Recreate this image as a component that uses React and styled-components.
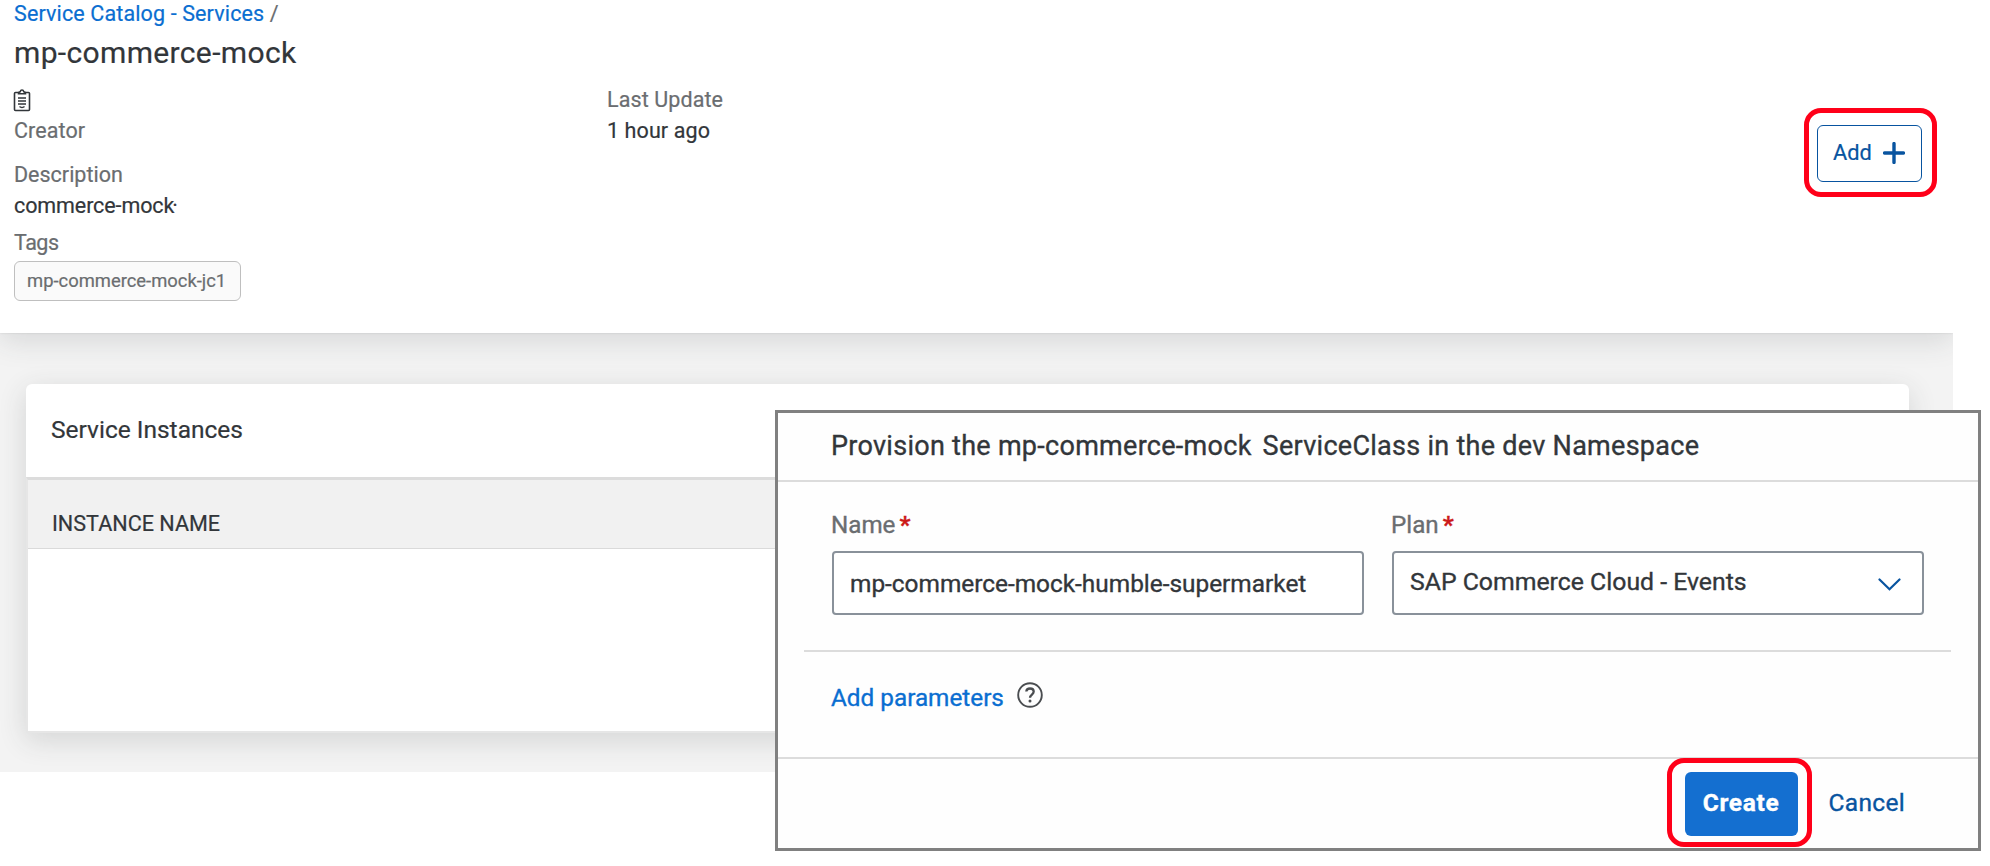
import React from 'react';
import styled, { createGlobalStyle } from 'styled-components';

const Global = createGlobalStyle`
  body { margin: 0; background: #fff; }
  * { box-sizing: border-box; }
`;

const Page = styled.div`
  position: relative;
  width: 1990px;
  height: 866px;
  overflow: hidden;
  font-family: Roboto, "Liberation Sans", sans-serif;
  color: #32363a;
  -webkit-text-stroke: 0.2px;
`;

const Main = styled.main`
  width: 1953px;
  height: 772px;
  overflow: hidden;
  background: #f3f3f3;
`;

const Header = styled.header`
  height: 333px;
  padding: 0 16px 0 14px;
  background: #fff;
  box-shadow: 0 7px 28px rgba(50, 54, 58, 0.15), 0 0 2px rgba(50, 54, 58, 0.15);
`;

const Breadcrumb = styled.nav`
  font-size: 21.5px;
  line-height: 27px;
  letter-spacing: 0.13px;
  color: #6a6d70;
  white-space: pre;
`;

const CrumbLink = styled.a`
  color: #0a6ed1;
`;

const Title = styled.h1`
  margin: 0 0 5px;
  font-size: 30px;
  font-weight: 400;
  line-height: 52px;
  letter-spacing: 0.35px;
`;

const HeaderBody = styled.div`
  display: flex;
  align-items: flex-start;
`;

const Column = styled.div`
  width: ${p => p.$width};
`;

const IconRow = styled.div`
  display: flex;
  align-items: center;
  height: 31px;
  padding-top: 2px;
  svg { margin-left: -1px; }
`;

const Line = styled.div`
  margin-top: ${p => p.$gap || 0}px;
  font-size: 21.5px;
  line-height: 31px;
  letter-spacing: ${p => p.$spacing || 0}px;
  color: ${p => (p.$label ? '#6a6d70' : '#32363a')};
`;

const Dot = styled.span`
  margin-left: -2px;
`;

const Tag = styled.span`
  display: flex;
  align-items: center;
  width: 227px;
  height: 40px;
  margin: 3px 0 0;
  padding: 0 0 1px 12px;
  border: 1.5px solid #bfbfbf;
  border-radius: 6px;
  background: #fafafa;
  font-size: 18.4px;
  color: #6a6d70;
`;

const Highlighted = styled.div`
  position: relative;
  margin: ${p => p.$margin || 0};
  &::after {
    content: '';
    position: absolute;
    inset: ${p => p.$inset};
    border: 5px solid #ff0019;
    border-radius: 17px;
    pointer-events: none;
  }
`;

const Button = styled.button`
  display: flex;
  align-items: center;
  justify-content: center;
  padding: 0 0 2px;
  border-radius: 6px;
  font-family: inherit;
  -webkit-text-stroke: inherit;
`;

const AddButton = styled(Button)`
  gap: 11px;
  width: 105px;
  height: 57px;
  padding-right: 1px;
  border: 1.5px solid #0854a0;
  background: #fff;
  color: #0854a0;
  font-size: 21.8px;
`;

const CreateButton = styled(Button)`
  width: 113px;
  height: 64px;
  border: 0;
  background: #146fd0;
  color: #fff;
  font-size: 24.5px;
  font-weight: 700;
  letter-spacing: 0.7px;
`;

const CancelButton = styled(Button)`
  border: 0;
  background: none;
  color: #0854a0;
  font-size: 24.5px;
  letter-spacing: 0.3px;
`;

const Card = styled.section`
  width: 1883px;
  height: 349px;
  margin: 51px 0 0 26px;
  border-radius: 6px 6px 0 0;
  background: #fff;
  box-shadow: 0 7px 28px rgba(50, 54, 58, 0.16);
`;

const CardTitle = styled.h2`
  height: 93px;
  margin: 0;
  padding-left: 25px;
  font-size: 24.5px;
  font-weight: 400;
  line-height: 92px;
`;

const Table = styled.div`
  height: 256px;
  border: 2px solid #e6e6e6;
  border-top: 3px solid #dcdcdc;
`;

const TableHead = styled.div`
  height: 69px;
  padding-left: 24px;
  border-bottom: 1px solid #dadada;
  background: #f1f1f1;
  font-size: 21.6px;
  line-height: 87px;
`;

const Dialog = styled.div`
  position: absolute;
  left: 775px;
  top: 410px;
  display: flex;
  flex-direction: column;
  width: 1206px;
  height: 441px;
  border: 3px solid #808080;
  background: #fefefe;
  -webkit-text-stroke: 0.35px;
`;

const DialogTitle = styled.h2`
  display: flex;
  gap: 11px;
  height: 69px;
  margin: 0;
  padding-left: 53px;
  border-bottom: 2px solid #dcdcdc;
  font-size: 27px;
  font-weight: 400;
  line-height: 66px;
  letter-spacing: 0.28px;
`;

const Form = styled.div`
  display: flex;
  gap: 28px;
  height: 170px;
  margin: 0 27px 0 26px;
  padding: 28px 0 0 28px;
  border-bottom: 2px solid #dcdcdc;
`;

const Field = styled.div`
  width: 532px;
`;

const Label = styled.label`
  display: flex;
  gap: 4px;
  margin: 0 0 11px -1px;
  font-size: 24.2px;
  line-height: 30px;
  color: #6a6d70;
`;

const Required = styled.span`
  color: #cc1919;
  font-weight: 700;
`;

const Control = styled.div`
  display: flex;
  align-items: center;
  justify-content: space-between;
  height: 64px;
  padding: 0 21px ${p => p.$lift || 0}px 16px;
  border: 2px solid #89919a;
  border-radius: 4px;
  background: #fff;
  font-size: ${p => p.$size}px;
  svg { margin-top: 5px; }
`;

const Parameters = styled.div`
  flex: 1;
  display: flex;
  align-items: center;
  gap: 13px;
  padding: 0 0 15px 53px;
  color: #0a6ed1;
  font-size: 24.3px;
  svg { margin-top: -4px; }
`;

const Footer = styled.footer`
  display: flex;
  align-items: center;
  justify-content: flex-end;
  gap: 31px;
  height: 91px;
  padding: 0 73px 0 0;
  border-top: 2px solid #dcdcdc;
`;

const Clipboard = () => (
  <svg width="18" height="23" viewBox="0 0 18 23" fill="none" stroke="#32363a" strokeWidth="1.6">
    <rect x="1.5" y="3.5" width="15" height="18" rx="1" />
    <path d="M5.5 4.8h7c0-1.5-.9-2-1.7-2.1C10.5 1.5 9.9 1 9 1S7.500 1.500 7.200 2.700C6.400 2.800 5.500 3.300 5.500 4.800z" fill="#fff" />
    <path d="M5 9h8M5 12h8M5 15h8M6.500 17.500c1.300 1.200 3.700 1.200 5 0" />
  </svg>
);

const Plus = () => (
  <svg width="22" height="22" viewBox="0 0 22 22" stroke="#0854a0" strokeWidth="3.4" strokeLinecap="round">
    <path d="M11 1.600v18.800M1.600 11h18.800" />
  </svg>
);

const Chevron = () => (
  <svg width="23" height="13" viewBox="0 0 23 13" fill="none" stroke="#0854a0" strokeWidth="2.2" strokeLinecap="round">
    <path d="M1.500 1.500l10 9.800 10-9.800" />
  </svg>
);

const Help = () => (
  <svg width="26" height="26" viewBox="0 0 26 26" fill="none" stroke="#4a4d50" strokeWidth="1.9">
    <circle cx="13" cy="13" r="11.8" />
    <path d="M9.300 9.500c.2-2 1.700-3 3.700-3 2.200 0 3.700 1.200 3.700 3.100 0 2.900-3.700 3-3.700 6.200" strokeWidth="2.3" />
    <circle cx="13" cy="19" r="1.500" fill="#4a4d50" stroke="none" />
  </svg>
);

export default function App() {
  return (
    <Page>
      <Global />
      <Main>
        <Header>
          <Breadcrumb><CrumbLink>Service Catalog - Services</CrumbLink> /</Breadcrumb>
          <Title>mp-commerce-mock</Title>
          <HeaderBody>
            <Column $width="593px">
              <IconRow><Clipboard /></IconRow>
              <Line $label $spacing={0.1}>Creator</Line>
              <Line $label $gap={13}>Description</Line>
              <Line $spacing={-0.1}>commerce-mock<Dot>·</Dot></Line>
              <Line $label $gap={6} $spacing={-0.5}>Tags</Line>
              <Tag>mp-commerce-mock-jc1</Tag>
            </Column>
            <Column $width="1210px">
              <Line $label $spacing={0.1}>Last Update</Line>
              <Line $spacing={0.1}>1 hour ago</Line>
            </Column>
            <Highlighted $margin="41px 0 0" $inset="-17px -15px -15px -13px">
              <AddButton>Add <Plus /></AddButton>
            </Highlighted>
          </HeaderBody>
        </Header>
        <Card>
          <CardTitle>Service Instances</CardTitle>
          <Table>
            <TableHead>INSTANCE NAME</TableHead>
          </Table>
        </Card>
      </Main>
      <Dialog>
        <DialogTitle>
          <span>Provision the mp-commerce-mock</span>
          <span>ServiceClass in the dev Namespace</span>
        </DialogTitle>
        <Form>
          <Field>
            <Label>Name<Required>*</Required></Label>
            <Control $size={24.4}>mp-commerce-mock-humble-supermarket</Control>
          </Field>
          <Field>
            <Label>Plan<Required>*</Required></Label>
            <Control $size={24.8} $lift={3}>SAP Commerce Cloud - Events<Chevron /></Control>
          </Field>
        </Form>
        <Parameters>Add parameters<Help /></Parameters>
        <Footer>
          <Highlighted $inset="-14px -14px -11px -18px">
            <CreateButton>Create</CreateButton>
          </Highlighted>
          <CancelButton>Cancel</CancelButton>
        </Footer>
      </Dialog>
    </Page>
  );
}
